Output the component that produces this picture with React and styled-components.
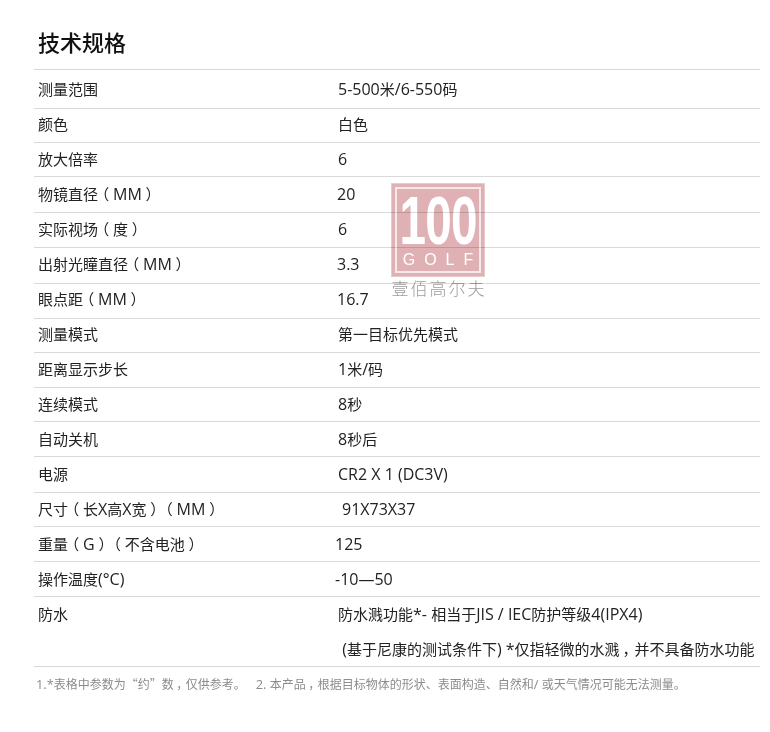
import styled, { createGlobalStyle } from 'styled-components';

const GlobalStyle = createGlobalStyle`
  body {
    margin: 0;
    background: #fff;
    font-family: "Noto Sans CJK SC", "Open Sans", sans-serif;
    color: #222;
  }
`;

const Page = styled.div`
  position: relative;
  width: 770px;
  height: 732px;
  padding: 0 10px 0 34px;
  box-sizing: border-box;
  overflow: hidden;
`;

const Title = styled.h2`
  margin: 0;
  height: 69px;
  padding: 25px 0 0 4px;
  box-sizing: border-box;
  font-size: 22px;
  line-height: 32px;
  font-weight: 500;
  color: #111;
`;

const Table = styled.div`
  border-top: 1px solid #d9d9d9;
`;

const Row = styled.div`
  display: grid;
  grid-template-columns: 300px 1fr;
  height: ${(p) => p.$h}px;
  box-sizing: border-box;
  border-bottom: 1px solid #d9d9d9;
  padding: ${(p) => p.$pad}px 0 0 4px;
  font-size: 15px;
  line-height: 30px;
`;

const Label = styled.div`
  white-space: pre;
`;

const Value = styled.div`
  display: flex;
  flex-direction: column;
  gap: 5px;
  margin-left: ${(p) => p.$shift || 0}px;
  white-space: pre;
`;

const Latin = styled.span`
  font-family: "Open Sans", sans-serif;
  font-size: 1.0667em;
`;

// half-width glyph with padding, so the mark sits in the middle of its em
const Punct = styled.span`
  font-feature-settings: "halt";
  padding-left: ${(p) => p.$left}em;
  padding-right: ${(p) => 0.5 - p.$left}em;
`;

const Note = styled.p`
  margin: 0;
  padding: 8px 0 0 2px;
  font-size: 12px;
  line-height: 18px;
  color: #8c8c8c;
  white-space: pre;
`;

const Watermark = styled.div`
  position: absolute;
  left: 391px;
  top: 183px;
  width: 94px;
  display: flex;
  flex-direction: column;
  align-items: center;
  mix-blend-mode: multiply;
`;

const Badge = styled.div`
  width: 94px;
  height: 94px;
  box-sizing: border-box;
  background: #dfb1b5;
  border: 1px solid #e9c9cc;
  outline: 2px solid #f7e9ea;
  outline-offset: -6px;
  display: flex;
  flex-direction: column;
  align-items: center;
  color: #fff;
  font-family: "Liberation Sans", sans-serif;
`;

const Hundred = styled.div`
  font-size: 68px;
  line-height: 58px;
  margin-top: 7px;
  font-weight: 700;
  letter-spacing: -1px;
  transform: scaleX(0.7);
`;

const Golf = styled.div`
  font-size: 16px;
  line-height: 16px;
  margin-top: 3px;
  letter-spacing: 9px;
  padding-left: 9px;
`;

const Brand = styled.div`
  margin-top: -1px;
  font-size: 17px;
  line-height: 24px;
  letter-spacing: 2px;
  padding-left: 2px;
  color: #9c9c9c;
  white-space: nowrap;
  font-weight: 300;
`;

const markLeft = { '（': 0.25, '）': 0.25, '，': 0.2 };

const typeset = (text) =>
  text.split(/([\x20-\x7e°—]+|[（），])/).filter(Boolean).map((part, i) => {
    if (markLeft[part]) return <Punct key={i} $left={markLeft[part]}>{part}</Punct>;
    if (/^[\x20-\x7e°—]+$/.test(part)) return <Latin key={i}>{part}</Latin>;
    return part;
  });

const rows = [
  { label: '测量范围', value: ['5-500米/6-550码'], h: 39, pad: 4 },
  { label: '颜色', value: ['白色'], h: 34, pad: 0 },
  { label: '放大倍率', value: ['6'], h: 34, pad: 1 },
  { label: '物镜直径（MM）', value: ['20'], h: 36, pad: 2, shift: -1 },
  { label: '实际视场（度）', value: ['6'], h: 35, pad: 1 },
  { label: '出射光瞳直径（MM）', value: ['3.3'], h: 36, pad: 1, shift: -1 },
  { label: '眼点距（MM）', value: ['16.7'], h: 35, pad: 0, shift: -1 },
  { label: '测量模式', value: ['第一目标优先模式'], h: 34, pad: 0 },
  { label: '距离显示步长', value: ['1米/码'], h: 35, pad: 1 },
  { label: '连续模式', value: ['8秒'], h: 34, pad: 1 },
  { label: '自动关机', value: ['8秒后'], h: 35, pad: 2 },
  { label: '电源', value: ['CR2 X 1 (DC3V)'], h: 36, pad: 2 },
  { label: '尺寸（长X高X宽）（MM）', value: ['91X73X37'], h: 34, pad: 1, shift: 4 },
  { label: '重量（G）（不含电池）', value: ['125'], h: 35, pad: 2, shift: -3 },
  { label: '操作温度(°C)', value: ['-10—50'], h: 35, pad: 2, shift: -3 },
  {
    label: '防水',
    value: ['防水溅功能*- 相当于JIS / IEC防护等级4(IPX4)', ' (基于尼康的测试条件下) *仅指轻微的水溅，并不具备防水功能'],
    h: 70,
    pad: 2,
  },
];

function App() {
  return (
    <Page>
      <GlobalStyle />
      <Title>技术规格</Title>
      <Table>
        {rows.map((row) => (
          <Row key={row.label} $h={row.h} $pad={row.pad}>
            <Label>{typeset(row.label)}</Label>
            <Value $shift={row.shift}>
              {row.value.map((line) => (
                <div key={line}>{typeset(line)}</div>
              ))}
            </Value>
          </Row>
        ))}
      </Table>
      <Note>{typeset('1.*表格中参数为“约”数，仅供参考。   2. 本产品，根据目标物体的形状、表面构造、自然和/ 或天气情况可能无法测量。')}</Note>
      <Watermark>
        <Badge>
          <Hundred>100</Hundred>
          <Golf>GOLF</Golf>
        </Badge>
        <Brand>壹佰高尔夫</Brand>
      </Watermark>
    </Page>
  );
}

export default App;
